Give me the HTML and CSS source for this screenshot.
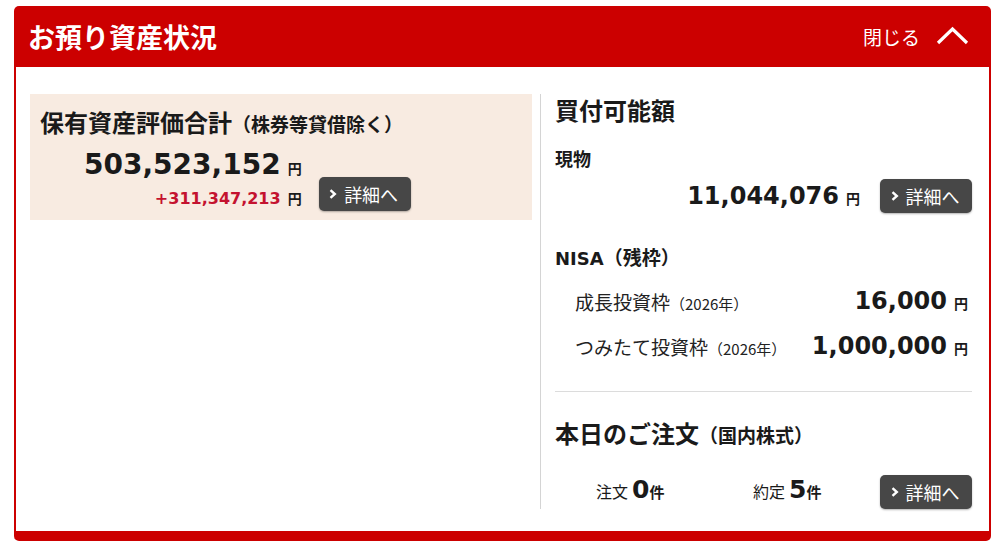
FILE: index.html
```html
<!DOCTYPE html>
<html lang="ja">
<head>
  <meta charset="UTF-8">
  <title>お預り資産状況</title>
  <link rel="stylesheet" href="styles.css">
</head>
<body>
  <div class="panel">
    <div class="panel-head">
      <h1>お預り資産状況</h1>
      <div class="close">
        <span>閉じる</span>
        <svg width="33" height="19" viewBox="0 0 33 19"><polyline points="2,17 16.5,3 31,17" fill="none" stroke="#fff" stroke-width="3.2"/></svg>
      </div>
    </div>

    <div class="panel-body">
      <!-- 保有資産 -->
      <div class="assets">
        <div class="assets-box">
          <h2>保有資産評価合計<small>（株券等貸借除く）</small></h2>
          <div class="assets-row">
            <div class="assets-nums">
              <div class="big num">503,523,152<span class="yen">円</span></div>
              <div class="diff num">+311,347,213<span class="yen">円</span></div>
            </div>
            <a class="btn" href="#"><svg width="8" height="10" viewBox="0 0 8 10"><polyline points="1.5,1.2 5.8,5 1.5,8.8" fill="none" stroke="#fff" stroke-width="2.4"/></svg>詳細へ</a>
          </div>
        </div>
      </div>

      <!-- 買付可能額 / 注文 -->
      <div class="buy">
        <h3>買付可能額</h3>
        <div class="label">現物</div>
        <div class="amount-row">
          <span class="mid num">11,044,076<span class="yen">円</span></span>
          <a class="btn" href="#"><svg width="8" height="10" viewBox="0 0 8 10"><polyline points="1.5,1.2 5.8,5 1.5,8.8" fill="none" stroke="#fff" stroke-width="2.4"/></svg>詳細へ</a>
        </div>

        <div class="label nisa"><span class="num">NISA</span>（残枠）</div>
        <div class="nisa-row first">
          <span class="name">成長投資枠<small>（2026年）</small></span>
          <span class="mid num">16,000<span class="yen">円</span></span>
        </div>
        <div class="nisa-row">
          <span class="name">つみたて投資枠<small>（2026年）</small></span>
          <span class="mid num">1,000,000<span class="yen">円</span></span>
        </div>

        <hr>

        <h3 class="orders-title">本日のご注文<small>（国内株式）</small></h3>
        <div class="orders">
          <span class="count">注文<b class="num">0</b><em>件</em></span>
          <span class="count">約定<b class="num">5</b><em>件</em></span>
          <a class="btn" href="#"><svg width="8" height="10" viewBox="0 0 8 10"><polyline points="1.5,1.2 5.8,5 1.5,8.8" fill="none" stroke="#fff" stroke-width="2.4"/></svg>詳細へ</a>
        </div>
      </div>
    </div>
  </div>
</body>
</html>
```

FILE: styles.css
```css
body {
  margin: 0;
  padding: 6px 9px 0 14px;
  font-family: "Noto Sans CJK JP", sans-serif;
  color: #1a1a1a;
  background: #fff;
}

.num {
  font-family: "DejaVu Sans", "Noto Sans CJK JP", sans-serif;
  font-weight: bold;
}

.panel {
  width: 977px;
}

.panel-head {
  height: 61px;
  background: #cc0000;
  border-radius: 5px 5px 0 0;
  display: flex;
  align-items: center;
  justify-content: space-between;
  padding: 0 22px 0 14px;
  color: #fff;
}

.panel-head h1 {
  margin: 0;
  font-size: 27px;
  line-height: 32px;
  font-weight: bold;
}

.close {
  display: flex;
  align-items: center;
  gap: 16px;
  font-size: 19px;
}

.close svg { display: block; margin-top: -2px; }

.panel-body {
  border: 2px solid #cc0000;
  border-top: 0;
  border-bottom: 10px solid #cc0000;
  border-radius: 0 0 5px 5px;
  padding: 27px 17px 22px 14px;
  display: grid;
  grid-template-columns: 502px minmax(0, 1fr);
}

/* left */
.assets-box {
  background: #f8ebe1;
  padding: 13px 10px 9px;
}

.assets-box h2 {
  margin: 0;
  font-size: 24px;
  line-height: 30px;
  font-weight: bold;
}

.assets-box h2 small,
.orders-title small {
  font-size: 19px;
}

.assets-row {
  display: flex;
  align-items: flex-end;
  padding-left: 44px;
  margin-top: 8px;
}

.assets-nums {
  text-align: right;
}

.big {
  font-size: 28px;
  line-height: 36px;
}

.diff {
  color: #c4122f;
  font-size: 16px;
  line-height: 24px;
  margin-top: 4px;
}

.diff .yen { color: #1a1a1a; }

.yen {
  font-family: "Noto Sans CJK JP", sans-serif;
  font-weight: bold;
  font-size: 14px;
  line-height: 1;
  margin-left: 7px;
}

.btn {
  display: flex;
  align-items: center;
  justify-content: center;
  gap: 7px;
  flex: none;
  width: 92px;
  height: 34px;
  box-sizing: border-box;
  padding-right: 2px;
  background: #474747;
  border-radius: 5px;
  box-shadow: 0 1px 2px rgba(0,0,0,0.3);
  color: #fff;
  font-size: 18px;
  text-decoration: none;
}

.assets-row .btn {
  margin-left: 17px;
}

/* right */
.buy {
  margin-left: 8px;
  border-left: 1px solid #d4d4d4;
  padding-left: 14px;
}

.buy h3 {
  margin: 0;
  font-size: 24px;
  line-height: 32px;
  font-weight: bold;
}

.label {
  margin-top: 20px;
  font-size: 18px;
  line-height: 24px;
  font-weight: bold;
}

.label.nisa {
  margin-top: 32px;
  font-size: 19px;
}

.label .num { font-size: 18px; line-height: 1; }

.amount-row {
  display: flex;
  align-items: center;
  justify-content: flex-end;
  gap: 20px;
  margin-top: 9px;
}

.mid {
  font-size: 24px;
  line-height: 34px;
}

.nisa-row {
  display: flex;
  align-items: center;
  justify-content: space-between;
  padding: 0 4px 0 20px;
  margin-top: 11px;
}

.nisa-row.first { margin-top: 15px; }

.name {
  font-size: 19px;
  color: #222;
}

.name small {
  font-size: 15px;
}

hr {
  border: 0;
  border-top: 1px solid #dcdcdc;
  margin: 28px 0 0;
}

.buy .orders-title {
  margin-top: 25px;
}

.orders {
  display: flex;
  align-items: center;
  padding-left: 41px;
  margin-top: 23px;
}

.count {
  font-size: 16px;
  line-height: 34px;
}

.count:first-child {
  width: 157px;
}

.count b {
  font-size: 25px;
  line-height: 1;
  margin-left: 4px;
}

.count em {
  font-style: normal;
  font-weight: bold;
  font-size: 15px;
}

.orders .btn {
  margin-left: auto;
}
```
